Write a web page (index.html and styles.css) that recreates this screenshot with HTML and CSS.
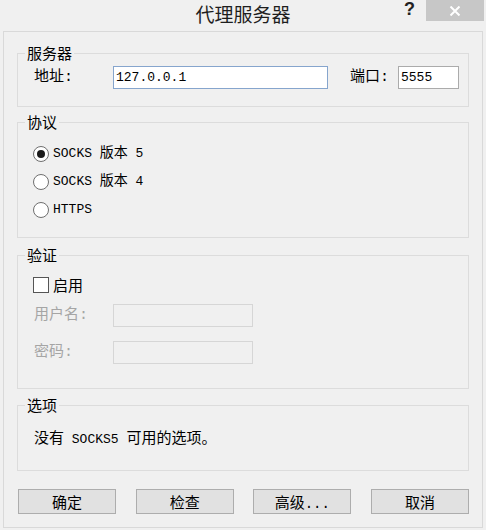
FILE: index.html
```html
<!DOCTYPE html>
<html lang="zh-CN">
<head>
<meta charset="utf-8">
<title>代理服务器</title>
<link rel="stylesheet" href="styles.css">
</head>
<body>
<div class="window">
  <div class="titlebar">
    <div class="title">代理服务器</div>
    <div class="help">?</div>
    <div class="close">
      <svg width="12" height="10" viewBox="0 0 12 10"><path d="M1.5 0.5 L10.5 9.5 M10.5 0.5 L1.5 9.5" stroke="#ffffff" stroke-width="2" fill="none"/></svg>
    </div>
  </div>
  <div class="client">
    <fieldset class="group g-server">
      <legend>服务器</legend>
      <div class="row server-row">
        <span class="lbl lbl-addr">地址:</span>
        <div class="edit edit-addr">127.0.0.1</div>
        <span class="lbl lbl-port">端口:</span>
        <div class="edit edit-port">5555</div>
      </div>
    </fieldset>

    <fieldset class="group g-proto">
      <legend>协议</legend>
      <div class="group-body proto-body">
        <div class="opt"><span class="radio checked"></span><span class="opt-text">SOCKS <span class="zh">版本</span> 5</span></div>
        <div class="opt"><span class="radio"></span><span class="opt-text">SOCKS <span class="zh">版本</span> 4</span></div>
        <div class="opt"><span class="radio"></span><span class="opt-text">HTTPS</span></div>
      </div>
    </fieldset>

    <fieldset class="group g-auth">
      <legend>验证</legend>
      <div class="group-body auth-body">
        <div class="chk-row"><span class="checkbox"></span><span class="chk-text">启用</span></div>
        <div class="row auth-row first">
          <span class="lbl lbl-dis">用户名:</span>
          <div class="edit edit-dis"></div>
        </div>
        <div class="row auth-row second">
          <span class="lbl lbl-dis">密码:</span>
          <div class="edit edit-dis"></div>
        </div>
      </div>
    </fieldset>

    <fieldset class="group g-opts">
      <legend>选项</legend>
      <div class="group-body opts-body">
        <div class="opts-text"><span class="zh">没有</span> SOCKS5 <span class="zh">可用的选项。</span></div>
      </div>
    </fieldset>

    <div class="buttons">
      <div class="btn">确定</div>
      <div class="btn">检查</div>
      <div class="btn">高级<span class="dots">...</span></div>
      <div class="btn">取消</div>
    </div>
  </div>
</div>
</body>
</html>
```

FILE: styles.css
```css
* { box-sizing: border-box; }
html, body {
  margin: 0;
  padding: 0;
  background: #f0f0f0;
}
body {
  width: 486px;
  height: 530px;
  overflow: hidden;
  font-family: "Noto Sans CJK SC", "Liberation Sans", sans-serif;
  color: #000;
}
.window {
  width: 486px;
  height: 530px;
}
.titlebar {
  height: 31px;
  display: grid;
  grid-template-columns: 1fr 22px 58px 2px;
  grid-template-rows: 31px;
}
.title {
  grid-column: 1 / -1;
  grid-row: 1;
  text-align: center;
  font-size: 19px;
  line-height: 28px;
  color: #1e1e1e;
}
.help {
  grid-column: 2;
  grid-row: 1;
  font-family: "Liberation Sans", sans-serif;
  font-weight: bold;
  font-size: 18px;
  line-height: 19px;
  color: #222;
}
.close {
  grid-column: 3;
  grid-row: 1;
  height: 21px;
  background: #c7c7c7;
  display: flex;
  align-items: center;
  justify-content: center;
}
.close svg { display: block; }

.client {
  margin: 0 3px;
  border: 1px solid #d9d9d9;
  padding: 11px 13px 13px 13px;
}

.group {
  margin: 0;
  padding: 0;
  border: 1px solid #dcdcdc;
  min-width: 0;
}
.group legend {
  margin-left: 7px;
  padding: 0 2px;
  font-size: 15px;
  line-height: 20px;
}
.g-proto { margin-top: 5px; }
.g-auth { margin-top: 7px; }
.g-opts { margin-top: 6px; }

.row {
  display: flex;
  align-items: center;
}
.lbl {
  font-family: "Liberation Mono", "Noto Sans CJK SC", monospace;
  font-size: 15px;
  line-height: 20px;
}
.edit {
  height: 23px;
  border: 1px solid #ababab;
  background: #fff;
  font-family: "Liberation Mono", monospace;
  font-size: 13px;
  line-height: 21px;
  padding-left: 2px;
  color: #000;
}

.server-row {
  padding: 3px 0 17px 16px;
}
.lbl-addr { width: 79px; }
.edit-addr {
  width: 215px;
  border-color: #86a5cd;
}
.lbl-port {
  margin-left: 22px;
  width: 48px;
}
.edit-port { width: 61px; }

.proto-body {
  padding: 8px 0 13px 15px;
}
.opt {
  height: 28px;
  display: flex;
  align-items: center;
}
.radio {
  width: 16px;
  height: 16px;
  border: 1px solid #6f6f6f;
  border-radius: 50%;
  background: #fff;
  display: flex;
  align-items: center;
  justify-content: center;
}
.radio.checked::after {
  content: "";
  width: 8px;
  height: 8px;
  border-radius: 50%;
  background: #1a1a1a;
}
.opt-text {
  margin-left: 4px;
  font-family: "Liberation Mono", "Noto Sans CJK SC", monospace;
  font-size: 13px;
  line-height: 20px;
}
.zh {
  font-family: "Noto Sans CJK SC", sans-serif;
  font-size: 14px;
  line-height: 1;
}

.auth-body {
  padding: 9px 0 24px 15px;
}
.chk-row {
  height: 22px;
  display: flex;
  align-items: center;
}
.checkbox {
  width: 16px;
  height: 16px;
  border: 1px solid #555;
  background: #fff;
}
.chk-text {
  margin-left: 4px;
  font-size: 15px;
  line-height: 20px;
}
.auth-row { padding-left: 1px; }
.auth-row.first { margin-top: 8px; }
.auth-row.second { margin-top: 14px; }
.lbl-dis {
  width: 79px;
  color: #a5a5a5;
}
.edit-dis {
  width: 140px;
  background: #f0f0f0;
  border-color: #d6d6d6;
}

.opts-body {
  padding: 14px 0 19px 16px;
}
.opts-text {
  height: 22px;
  font-family: "Liberation Mono", "Noto Sans CJK SC", monospace;
  font-size: 13px;
  line-height: 22px;
}
.opts-text .zh { font-size: 15px; }

.buttons {
  margin-top: 18px;
  padding: 0 0 0 1px;
  display: flex;
  justify-content: space-between;
}
.btn {
  width: 98px;
  height: 25px;
  border: 1px solid #adadad;
  background: #e1e1e1;
  font-size: 15px;
  line-height: 23px;
  text-align: center;
}
.dots {
  font-family: "Liberation Mono", monospace;
  font-size: 14px;
}
```
